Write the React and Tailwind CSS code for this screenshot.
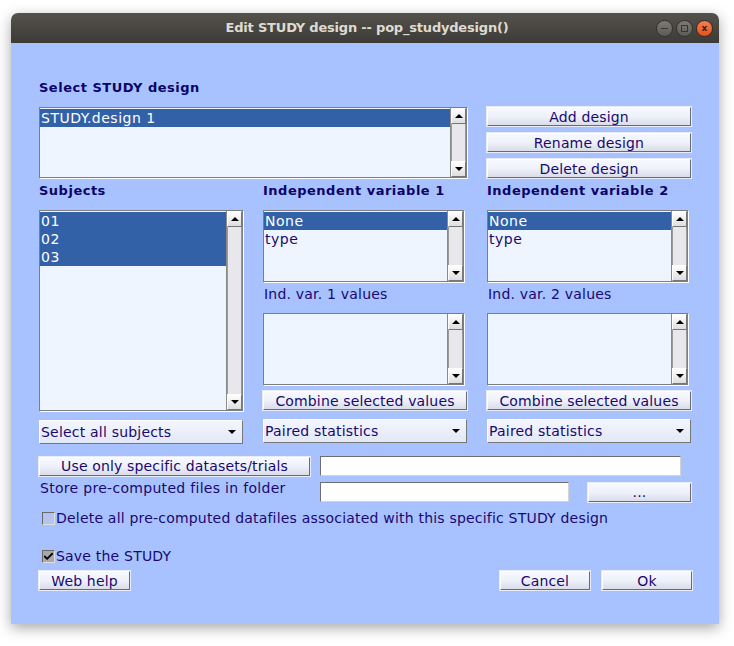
import { Check } from "lucide-react";

const FONT = { fontFamily: '"DejaVu Sans", "Liberation Sans", sans-serif' };

export default function App() {
  return (
    <div
      className="w-[734px] h-[646px] bg-white pt-[13px] pl-[11px] overflow-hidden"
      style={FONT}
    >
      <div className="w-[708px] h-[611px] flex flex-col rounded-t-[7px] shadow-[0_4px_14px_rgba(0,0,0,0.35)] overflow-hidden">
        <TitleBar />
        <div className="flex-1 bg-[#a8c2ff] pl-[28px] text-[14px] text-[#1a0870] tracking-[0.2px]">
          <DesignSection />
          <VariablesSection />
          <BottomSection />
        </div>
      </div>
    </div>
  );
}

function TitleBar() {
  return (
    <div className="h-[30px] flex items-center bg-gradient-to-b from-[#55524c] to-[#3c3b37] relative">
      <div className="flex-1 text-center text-[13px] font-bold text-[#dfdbd2] pl-[4px] tracking-[-0.2px]">
        Edit STUDY design -- pop_studydesign()
      </div>
      <div className="absolute right-[6px] top-[7px] flex gap-[3px]">
        <WinButton>
          <span className="block w-[7px] h-[1.5px] bg-[#38372f]" />
        </WinButton>
        <WinButton>
          <span className="block w-[7px] h-[7px] border border-[#38372f]" />
        </WinButton>
        <span className="w-[17px] h-[17px] rounded-full bg-gradient-to-b from-[#f5804f] to-[#e3501a] border border-[#3a2a20] flex items-center justify-center text-[9px] font-bold text-[#4a1a08] leading-none">
          x
        </span>
      </div>
    </div>
  );
}

function WinButton({ children }) {
  return (
    <span className="w-[17px] h-[17px] rounded-full bg-gradient-to-b from-[#7d7b74] to-[#5b5a55] border border-[#33322e] flex items-center justify-center">
      {children}
    </span>
  );
}

function DesignSection() {
  return (
    <>
      <div className="pt-[36px] h-[64px] font-bold text-[13px] text-[#0c0466] leading-[17px] tracking-[0.5px]">
        Select STUDY design
      </div>
      <div className="flex gap-[20px]">
        <ListBox width={428} height={71} items={["STUDY.design 1"]} selected={[0]} />
        <div className="flex flex-col gap-[7px]">
          <Button className="w-[204px]">Add design</Button>
          <Button className="w-[204px]">Rename design</Button>
          <Button className="w-[204px]">Delete design</Button>
        </div>
      </div>
    </>
  );
}

function VariablesSection() {
  return (
    <div className="grid grid-cols-[204px_204px_204px] gap-x-[20px] mt-[3px]">
      <Heading>Subjects</Heading>
      <Heading>Independent variable 1</Heading>
      <Heading>Independent variable 2</Heading>

      <div className="flex flex-col">
        <ListBox width={204} height={201} items={["01", "02", "03"]} selected={[0, 1, 2]} />
        <PopupMenu className="mt-[9px]">Select all subjects</PopupMenu>
      </div>
      <VariableColumn n={1} />
      <VariableColumn n={2} />
    </div>
  );
}

function Heading({ children }) {
  return (
    <div className="h-[29px] pt-[1px] font-bold text-[13px] text-[#0c0466] leading-[17px] tracking-[0.5px]">
      {children}
    </div>
  );
}

function VariableColumn({ n }) {
  return (
    <div className="flex flex-col">
      <ListBox width={201} height={72} items={["None", "type"]} selected={[0]} />
      <div className="h-[31px] pt-[4px] pl-[1px] leading-[17px] tracking-[0.2px]">Ind. var. {n} values</div>
      <ListBox width={201} height={72} items={[]} selected={[]} />
      <Button className="w-[204px] mt-[6px]">Combine selected values</Button>
      <PopupMenu className="mt-[9px]">Paired statistics</PopupMenu>
    </div>
  );
}

function BottomSection() {
  return (
    <div className="mt-[12px]">
      <div className="flex items-center">
        <Button className="w-[271px]">Use only specific datasets/trials</Button>
        <EditBox className="ml-[10px] w-[361px]" />
      </div>
      <div className="flex items-center mt-[6px]">
        <div className="w-[281px] pl-[1px] leading-[17px] -mt-[7px] tracking-[0.3px]">
          Store pre-computed files in folder
        </div>
        <EditBox className="w-[249px]" />
        <Button className="ml-[19px] w-[103px]">...</Button>
      </div>
      <div className="mt-[8px]">
        <CheckBox label="Delete all pre-computed datafiles associated with this specific STUDY design" />
      </div>
      <div className="mt-[21px]">
        <CheckBox checked label="Save the STUDY" />
      </div>
      <div className="flex items-center mt-[6px]">
        <Button className="w-[91px]">Web help</Button>
        <Button className="ml-[370px] w-[90px]">Cancel</Button>
        <Button className="ml-[12px] w-[90px]">Ok</Button>
      </div>
    </div>
  );
}

function Button({ children, className = "" }) {
  return (
    <div
      className={`h-[19px] flex items-center justify-center leading-none tracking-[0.15px] bg-gradient-to-b from-[#f7f9ff] via-[#eef1fa] to-[#d9dde8] border border-t-white border-l-white border-b-[#6b6b6b] border-r-[#6b6b6b] outline outline-1 outline-[#e8ecf8] text-[#1a0870] ${className}`}
    >
      {children}
    </div>
  );
}

function PopupMenu({ children, className = "" }) {
  return (
    <div
      className={`h-[24px] w-[204px] flex items-center justify-between pl-[1px] pr-[6px] bg-gradient-to-b from-[#f3f6ff] to-[#e3e8f6] border border-t-white border-l-white border-b-[#777] border-r-[#777] tracking-[0.2px] ${className}`}
    >
      <span>{children}</span>
      <Triangle down />
    </div>
  );
}

function EditBox({ className = "" }) {
  return (
    <div
      className={`h-[20px] bg-white border border-t-[#6e6e6e] border-l-[#6e6e6e] border-b-[#d4d4d4] border-r-[#d4d4d4] ${className}`}
    />
  );
}

function ListBox({ width, height, items, selected }) {
  return (
    <div
      className="flex bg-[#eef5ff] border border-[#7e7e7e] shadow-[1px_1px_0_#ffffff]"
      style={{ width, height }}
    >
      <div className="flex-1 flex flex-col pt-[1px]">
        {items.map((item, i) => (
          <div
            key={item}
            className={`h-[18px] leading-[18px] pl-[1px] tracking-[0.5px] ${
              selected.includes(i) ? "bg-[#3261a8] text-white" : "text-[#1a0870]"
            }`}
          >
            {item}
          </div>
        ))}
      </div>
      <ScrollBar />
    </div>
  );
}

function ScrollBar() {
  return (
    <div className="w-[16px] flex flex-col border-l border-[#8a8a8a] bg-[#e6e6ea]">
      <ArrowBox>
        <Triangle />
      </ArrowBox>
      <div className="flex-1 border-x border-[#9a9a9a] bg-[#e8e8ec]" />
      <ArrowBox>
        <Triangle down />
      </ArrowBox>
    </div>
  );
}

function ArrowBox({ children }) {
  return (
    <div className="h-[16px] flex items-center justify-center bg-gradient-to-b from-white to-[#dedede] border border-t-white border-l-white border-b-[#777] border-r-[#777]">
      {children}
    </div>
  );
}

function Triangle({ down }) {
  return (
    <span
      className={`block w-0 h-0 border-l-[4px] border-r-[4px] border-l-transparent border-r-transparent ${
        down ? "border-t-[4px] border-t-black" : "border-b-[4px] border-b-black"
      }`}
    />
  );
}

function CheckBox({ checked, label }) {
  return (
    <div className="flex items-center pl-[3px] tracking-[0.2px] leading-[17px]">
      <span
        className={`w-[13px] h-[13px] flex items-center justify-center border border-t-[#6a6a6a] border-l-[#6a6a6a] border-b-[#e0e0e0] border-r-[#e0e0e0] ${
          checked ? "bg-[#a8a8b0]" : "bg-[#b4c4f0]"
        }`}
      >
        {checked && <Check className="w-[13px] h-[13px] text-black" strokeWidth={4} />}
      </span>
      <span className="ml-[1px]">{label}</span>
    </div>
  );
}
